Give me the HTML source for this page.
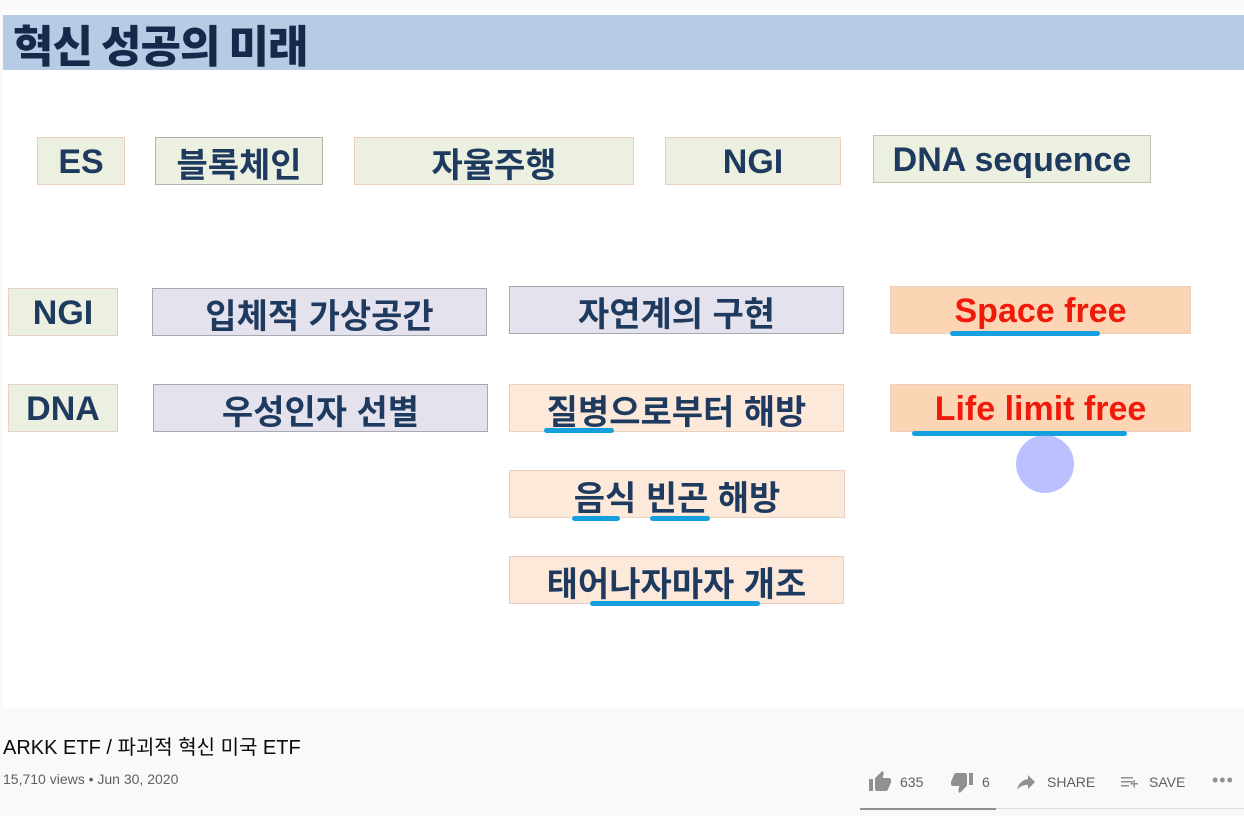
<!DOCTYPE html><html><head><meta charset="utf-8"><style>
body{margin:0;width:1244px;height:816px;background:#f9f9f9;position:relative;overflow:hidden;font-family:"Liberation Sans","Noto Sans CJK KR",sans-serif}
.v{position:absolute;left:3px;top:10px;width:1241px;height:698px;background:#fff}
.t{position:absolute;left:3px;top:15px;width:1241px;height:55px;background:#b7cce4;color:#17294a;font:900 44px "Noto Sans CJK KR",sans-serif;line-height:56px;padding-left:10px;box-sizing:border-box;letter-spacing:-1px}
.b{position:absolute;height:48px;box-sizing:border-box;border:1px solid #eccfbf;display:flex;align-items:center;justify-content:center;padding-top:2px;font:bold 34px "Liberation Sans","Noto Sans CJK KR",sans-serif;color:#1f3a5f}
.g{background:#ebf0e0}.l{background:#e4e2ec;border-color:#a8a8b0}.p{background:#fde9d9}.o{background:#fcd5b5;color:#f01a0a}
.u{position:absolute;height:5px;background:#14a0de;border-radius:3px}
.s{position:absolute;color:#606060;font-size:14px}
</style></head><body>
<div class="v"></div>
<div class="t">혁신 성공의 미래</div>
<div class="b g" style="left:37px;top:137px;width:88px">ES</div>
<div class="b g" style="left:155px;top:137px;width:168px;border-color:#b8b0a8">블록체인</div>
<div class="b g" style="left:354px;top:137px;width:280px">자율주행</div>
<div class="b g" style="left:665px;top:137px;width:176px">NGI</div>
<div class="b g" style="left:873px;top:135px;width:278px;border-color:#c8c0b0">DNA sequence</div>
<div class="b g" style="left:8px;top:288px;width:110px">NGI</div>
<div class="b l" style="left:152px;top:288px;width:335px">입체적 가상공간</div>
<div class="b l" style="left:509px;top:286px;width:335px">자연계의 구현</div>
<div class="b o" style="left:890px;top:286px;width:301px">Space free</div>
<div class="b g" style="left:8px;top:384px;width:110px">DNA</div>
<div class="b l" style="left:153px;top:384px;width:335px">우성인자 선별</div>
<div class="b p" style="left:509px;top:384px;width:335px">질병으로부터 해방</div>
<div class="b o" style="left:890px;top:384px;width:301px">Life limit free</div>
<div class="b p" style="left:509px;top:470px;width:336px">음식 빈곤 해방</div>
<div class="b p" style="left:509px;top:556px;width:335px">태어나자마자 개조</div>
<div class="u" style="left:950px;top:331px;width:150px"></div>
<div class="u" style="left:912px;top:431px;width:215px"></div>
<div class="u" style="left:544px;top:428px;width:70px"></div>
<div class="u" style="left:572px;top:516px;width:48px"></div>
<div class="u" style="left:650px;top:516px;width:60px"></div>
<div class="u" style="left:590px;top:601px;width:170px"></div>
<div style="position:absolute;left:1016px;top:435px;width:58px;height:58px;border-radius:50%;background:rgba(120,130,255,.5)"></div>
<div style="position:absolute;left:3px;top:731px;font-size:20px;color:#0a0a0a">ARKK ETF / 파괴적 혁신 미국 ETF</div>
<div class="s" style="left:3px;top:771px">15,710 views • Jun 30, 2020</div>
<svg style="position:absolute;left:868px;top:770px" width="24" height="24" viewBox="0 0 24 24" fill="#909090"><path d="M1 21h4V9H1v12zm22-11c0-1.1-.9-2-2-2h-6.3l1-4.6v-.3c0-.4-.2-.8-.4-1.1L14.2 1 7.6 7.6C7.2 7.9 7 8.4 7 9v10c0 1.1.9 2 2 2h9c.8 0 1.5-.5 1.8-1.2l3-7.1c.1-.2.2-.5.2-.7v-2z"/></svg>
<div class="s" style="left:900px;top:774px;color:#606060">635</div>
<svg style="position:absolute;left:950px;top:770px" width="24" height="24" viewBox="0 0 24 24" fill="#909090"><path d="M15 3H6c-.8 0-1.5.5-1.8 1.2l-3 7.1c-.1.2-.2.5-.2.7v2c0 1.1.9 2 2 2h6.3l-1 4.6v.3c0 .4.2.8.4 1.1L9.8 23l6.6-6.6c.4-.4.6-.9.6-1.4V5c0-1.1-.9-2-2-2zm4 0v12h4V3h-4z"/></svg>
<div class="s" style="left:982px;top:774px">6</div>
<svg style="position:absolute;left:1014px;top:770px" width="24" height="24" viewBox="0 0 24 24" fill="#909090"><path d="M14 9V5l7 7-7 7v-4.1c-5 0-8.5 1.6-11 5.1 1-5 4-10 11-11z"/></svg>
<div class="s" style="left:1047px;top:774px">SHARE</div>
<svg style="position:absolute;left:1118px;top:770px" width="24" height="24" viewBox="0 0 24 24" fill="#909090"><path d="M3 7h12v1.5H3zm0 4h12v1.5H3zm0 4h8v1.5H3zm14-2v-3h-1.5v3h-3v1.5h3v3H17v-3h3V13z"/></svg>
<div class="s" style="left:1149px;top:774px">SAVE</div>
<div class="s" style="left:1212px;top:770px;font-size:18px;color:#909090;letter-spacing:1px">•••</div>
<div style="position:absolute;left:860px;top:808px;width:136px;height:2px;background:#909090"></div>
<div style="position:absolute;left:996px;top:808px;width:248px;height:1px;background:#ddd"></div>
</body></html>
